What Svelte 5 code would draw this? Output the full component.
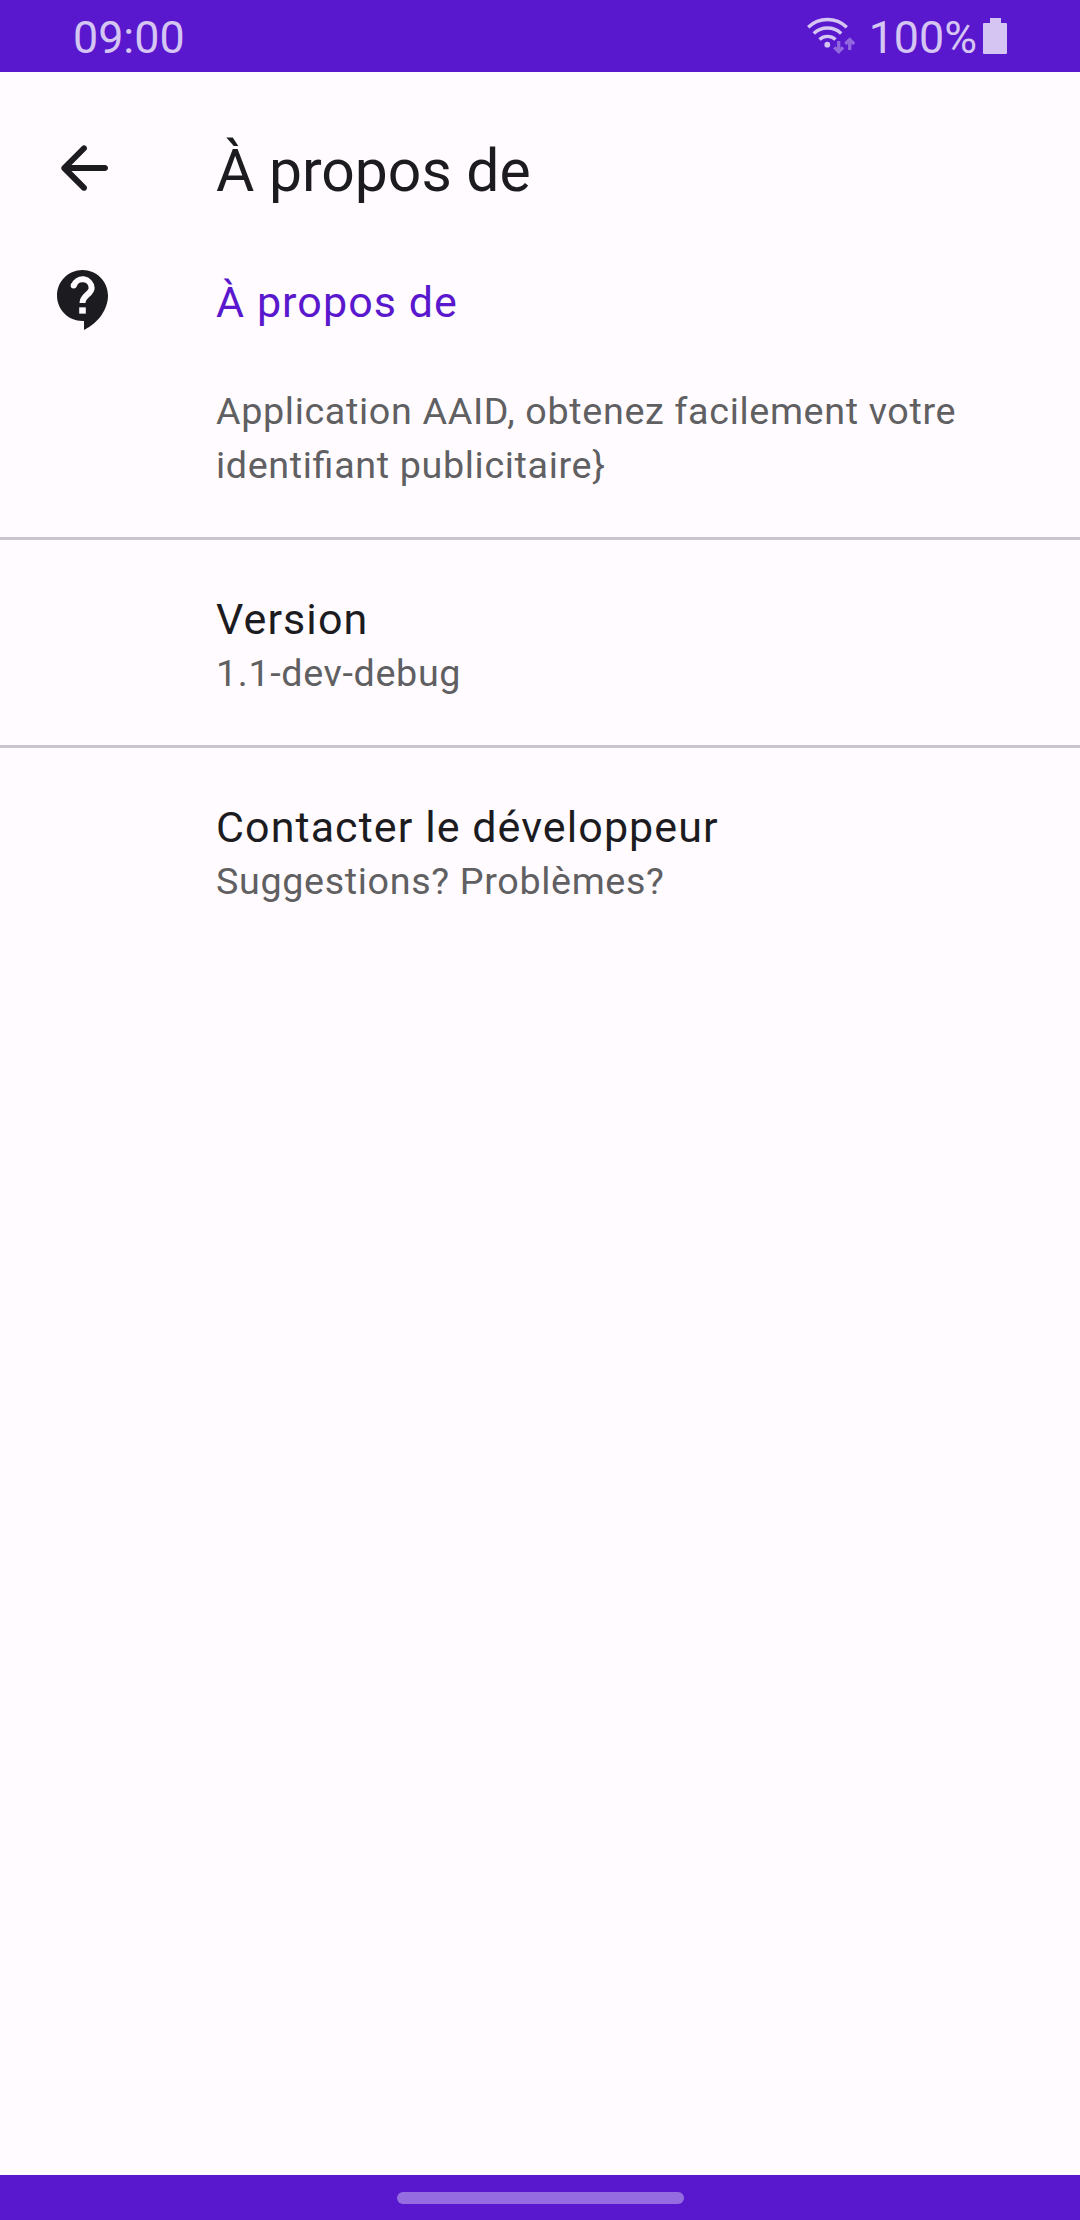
<script>
  const entries = [
    { title: 'Version', summary: '1.1-dev-debug' },
    { title: 'Contacter le développeur', summary: 'Suggestions? Problèmes?' }
  ];
</script>

<div class="screen">
  <header class="status">
    <span class="clock">09:00</span>
    <div class="indicators">
      <svg class="wifi" viewBox="0 0 54 40" width="54" height="40" fill="none">
        <g stroke="#d5c5f3" stroke-width="3.4">
          <path d="M3.2 11.2a28 28 0 0 1 38.6 0" />
          <path d="M8.8 17.4a20 20 0 0 1 27.4 0" />
          <path d="M14.5 23.4a12 12 0 0 1 16 0" />
        </g>
        <circle cx="22.3" cy="28.7" r="2.9" fill="#d5c5f3" />
        <g stroke="#9168dd" stroke-width="3.3">
          <path d="M33.7 25v11M29.3 31.3l4.4 4.4 4.4-4.4M44.7 34V23.5M40.3 28l4.4-4.4 4.4 4.4" />
        </g>
      </svg>
      <span class="percent">100%</span>
      <svg class="battery" viewBox="0 0 24 36" width="24" height="36">
        <path fill="#d5c5f3" d="M7 0h11v5h5a1 1 0 0 1 1 1v29a1 1 0 0 1-1 1H1a1 1 0 0 1-1-1V6a1 1 0 0 1 1-1h6z" />
      </svg>
    </div>
  </header>

  <div class="appbar">
    <svg class="icon" viewBox="0 0 24 24" fill="#1c1b1f">
      <path d="M19 11H7.83l4.88-4.88c.39-.39.39-1.02 0-1.41-.39-.39-1.02-.39-1.41 0l-6.59 6.59c-.39.39-.39 1.02 0 1.41l6.59 6.59c.39.39 1.02.39 1.41 0 .39-.39.39-1.02 0-1.41L7.83 13H19c.55 0 1-.45 1-1s-.45-1-1-1z" />
    </svg>
    <h1>À propos de</h1>
  </div>

  <main>
    <div class="category">
      <svg class="icon" viewBox="0 0 24 24">
        <path fill="#1c1b1f" d="M11.5 2C6.81 2 3 5.81 3 10.5S6.81 19 11.5 19h.5v3c4.86-2.34 8-7 8-11.5C20 5.81 16.19 2 11.5 2z" />
        <path fill="none" stroke="#fffbfe" stroke-width="2" d="M8.6 7.2a3.05 3.05 0 0 1 5.95.8c0 2-3.05 2.5-3.05 5" />
        <circle cx="8.55" cy="7.15" r="1" fill="#fffbfe" />
        <path fill="#fffbfe" d="M10.4 14.45h2.2v2.1h-2.2z" />
      </svg>
      <h2>À propos de</h2>
    </div>
    <p class="about">Application AAID, obtenez facilement votre identifiant publicitaire&#125;</p>
    {#each entries as entry}
      <section class="entry">
        <h3>{entry.title}</h3>
        <p>{entry.summary}</p>
      </section>
    {/each}
  </main>

  <footer><span class="handle"></span></footer>
</div>

<style>
  :global(body) {
    margin: 0;
    background: #fffbfe;
  }
  .screen {
    display: flex;
    flex-direction: column;
    width: 1080px;
    height: 2220px;
    background: #fffbfe;
    color: #1c1b1f;
    font-family: Roboto, 'Liberation Sans', sans-serif;
  }
  h1, h2, h3, p {
    margin: 0;
    font-weight: 400;
  }
  .status {
    display: flex;
    justify-content: space-between;
    box-sizing: border-box;
    height: 72px;
    padding: 0 73px;
    background: #5918cd;
    color: #d5c5f3;
    font-size: 44.8px;
    line-height: 75px;
  }
  .indicators {
    display: flex;
  }
  .wifi {
    margin: 16px 10px 0 0;
  }
  .battery {
    margin: 18px 0 0 6px;
  }
  .appbar {
    display: flex;
    align-items: flex-start;
    box-sizing: border-box;
    height: 192px;
    padding-top: 60px;
  }
  .icon {
    flex: none;
    width: 72px;
    height: 72px;
    margin: 0 96px 0 48px;
  }
  h1 {
    font-size: 58.8px;
    line-height: 78px;
  }
  .category {
    display: flex;
    height: 108px;
  }
  h2, h3 {
    font-size: 43px;
    letter-spacing: 1.08px;
  }
  h2 {
    color: #5918cd;
    line-height: 76px;
  }
  h3 {
    line-height: 54px;
  }
  p {
    color: #605f62;
    font-size: 37.7px;
    line-height: 54px;
    letter-spacing: 0.65px;
    font-feature-settings: 'liga' 1;
  }
  .about {
    padding: 12px 110px 45px 216px;
  }
  .entry {
    height: 208px;
    box-sizing: border-box;
    padding: 52px 48px 0 216px;
    border-top: 3px solid #cac4d0;
  }
  footer {
    display: flex;
    align-items: center;
    justify-content: center;
    height: 45px;
    margin-top: auto;
    background: #5918cd;
  }
  .handle {
    width: 287px;
    height: 12px;
    border-radius: 6px;
    background: #966de0;
  }
</style>
